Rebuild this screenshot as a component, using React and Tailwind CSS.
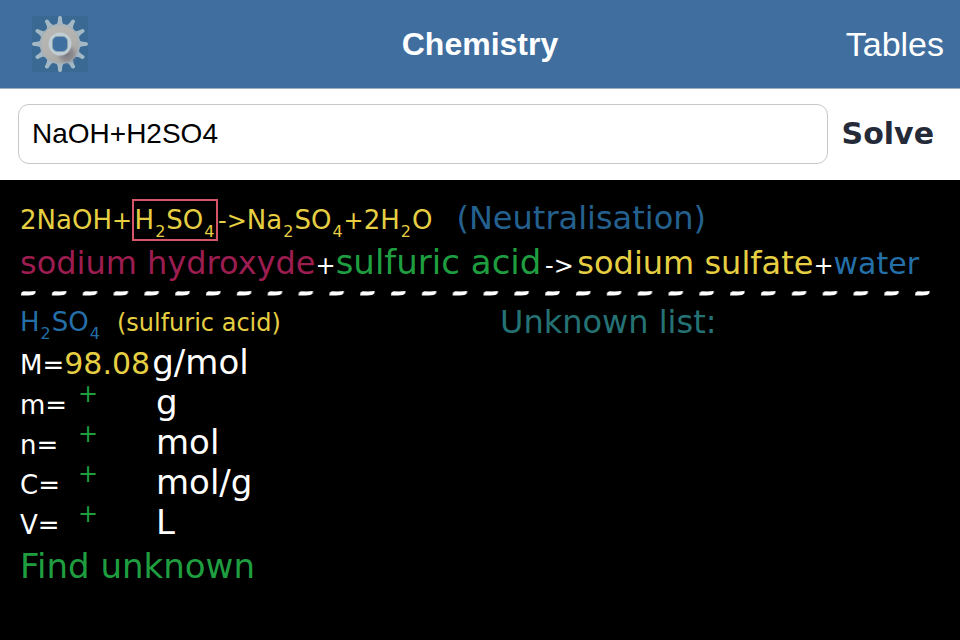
import { useState } from "react";

const TEETH = [0, 30, 60, 90, 120, 150, 180, 210, 240, 270, 300, 330];

function GearIcon() {
  return (
    <svg viewBox="0 0 56 56" className="size-14" aria-hidden="true">
      <defs>
        <linearGradient id="gearBody" x1="0.2" y1="0" x2="0.8" y2="1">
          <stop offset="0" stopColor="#b9b9b5" />
          <stop offset="0.6" stopColor="#b2b0ac" />
          <stop offset="1" stopColor="#a3a19f" />
        </linearGradient>
        <radialGradient id="gearShade" cx="0.5" cy="0.5" r="0.5">
          <stop offset="0" stopColor="#77757b" stopOpacity="0.95" />
          <stop offset="0.6" stopColor="#858388" stopOpacity="0.7" />
          <stop offset="1" stopColor="#9a989a" stopOpacity="0" />
        </radialGradient>
      </defs>
      <rect width="56" height="56" fill="#3a6994" />
      {TEETH.map((angle) => (
        <path
          key={angle}
          d="M23 10 Q26 7.5 26 3 Q25.6 0 28 0 Q30.4 0 30 3 Q30 7.5 33 10 Z"
          fill="#a3b7c5"
          transform={`rotate(${angle} 28 28)`}
        />
      ))}
      <circle cx="28" cy="28" r="19.5" fill="url(#gearBody)" stroke="#a3b1ba" strokeWidth="1.5" />
      <circle cx="35" cy="38" r="11" fill="url(#gearShade)" />
      <circle cx="28" cy="28" r="11.5" fill="#bfcdd4" />
      <rect x="20.5" y="20.5" width="15" height="15" rx="5" fill="#3f6fa0" stroke="#8aa0b0" strokeWidth="1" />
    </svg>
  );
}

function Sub({ children }) {
  return <span className="relative top-2 px-px text-[16px]">{children}</span>;
}

function SulfuricAcid() {
  return (
    <>
      H<Sub>2</Sub>SO<Sub>4</Sub>
    </>
  );
}

function DashedRule() {
  return (
    <svg className="mt-2 mb-1.5 h-1.5 w-full" aria-hidden="true">
      <defs>
        <pattern id="chalkDash" width="30.83" height="6" patternUnits="userSpaceOnUse">
          <path d="M1 5.6 L1.4 2.6 L3.5 1.2 L9 1.4 L15.6 0.9 L15.2 3.6 L13 5 L8 5.4 Z" fill="#fff" />
        </pattern>
      </defs>
      <rect width="100%" height="6" fill="url(#chalkDash)" />
    </svg>
  );
}

const QUANTITIES = [
  { symbol: "m", unit: "g" },
  { symbol: "n", unit: "mol" },
  { symbol: "C", unit: "mol/g" },
  { symbol: "V", unit: "L" },
];

export default function App() {
  const [equation, setEquation] = useState("NaOH+H2SO4");

  return (
    <div className="flex min-h-screen flex-col bg-black font-['Liberation_Sans',Arial,sans-serif]">
      <header className="grid h-[89px] grid-cols-[1fr_auto_1fr] items-center border-b border-[#9fb0c0] bg-[#406f9f] pr-4 pl-8 text-white">
        <button type="button" aria-label="Settings" className="justify-self-start">
          <GearIcon />
        </button>
        <h1 className="pr-4 text-[32px] leading-10 font-bold">Chemistry</h1>
        <a href="#tables" className="justify-self-end text-[34px] leading-10">
          Tables
        </a>
      </header>

      <form
        className="flex items-center gap-3.5 bg-white pt-[15px] pr-[26px] pb-4 pl-[18px]"
        onSubmit={(event) => event.preventDefault()}
      >
        <input
          type="text"
          aria-label="Equation"
          value={equation}
          onChange={(event) => setEquation(event.target.value)}
          className="h-[60px] min-w-0 flex-1 rounded-[11px] border border-[#c8c8c8] bg-white px-[13px] text-[28px] text-black outline-none"
        />
        <button
          type="submit"
          className="font-['DejaVu_Sans',Verdana,sans-serif] text-[30px] leading-10 font-bold text-[#242a38]"
        >
          Solve
        </button>
      </form>

      <main className="flex-1 bg-black px-5 pt-[18px] font-['DejaVu_Sans',Verdana,sans-serif] text-[26px] leading-10 whitespace-nowrap text-white">
        <div className="flex h-10 items-baseline text-[#e6cf42]">
          <span>2NaOH</span>
          <span className="text-[24px]">+</span>
          <button
            type="button"
            className="h-[42px] w-[86px] border-2 border-[#d65468] text-center leading-[38px]"
          >
            <SulfuricAcid />
          </button>
          <span className="text-[24px]">-&gt;</span>
          <span>
            Na<Sub>2</Sub>SO<Sub>4</Sub>
          </span>
          <span className="text-[24px]">+</span>
          <span>
            2H<Sub>2</Sub>O
          </span>
          <span className="pl-6 text-[32px] text-[#24618f]">(Neutralisation)</span>
        </div>

        <div className="mt-1 flex h-10 items-baseline text-[32px]">
          <span className="text-[#9c1d50]">sodium hydroxyde</span>
          <span className="text-[24px]">+</span>
          <span className="text-[34px] text-[#1f9e40]">sulfuric acid</span>
          <span className="w-9 text-center text-[24px]">-&gt;</span>
          <span className="text-[#e6cf42]">sodium sulfate</span>
          <span className="text-[24px]">+</span>
          <span className="text-[30px] text-[#256fa8]">water</span>
        </div>

        <DashedRule />

        <div className="grid grid-cols-[12fr_11fr]">
          <section>
            <h2 className="flex h-10 items-baseline">
              <span className="text-[#256fa8]">
                <SulfuricAcid />
              </span>
              <span className="pl-4 text-[24px] text-[#e6cf42]">(sulfuric acid)</span>
            </h2>
            <div className="flex h-10 items-baseline">
              <span>M=</span>
              <span className="w-[88px] text-[30px] text-[#e6cf42]">98.08</span>
              <span className="text-[34px]">g/mol</span>
            </div>
            {QUANTITIES.map(({ symbol, unit }) => (
              <div key={symbol} className="grid h-10 grid-cols-[58px_78px_auto] items-baseline justify-start">
                <span>{symbol}=</span>
                <button
                  type="button"
                  aria-label={`Add ${symbol}`}
                  className="self-start text-left text-[24px] leading-6 text-[#1f9e40]"
                >
                  +
                </button>
                <span className="text-[34px]">{unit}</span>
              </div>
            ))}
            <button type="button" className="mt-1 block text-[34px] text-[#1f9e40]">
              Find unknown
            </button>
          </section>
          <section>
            <h2 className="text-[32px] text-[#257274]">Unknown list:</h2>
          </section>
        </div>
      </main>
    </div>
  );
}
